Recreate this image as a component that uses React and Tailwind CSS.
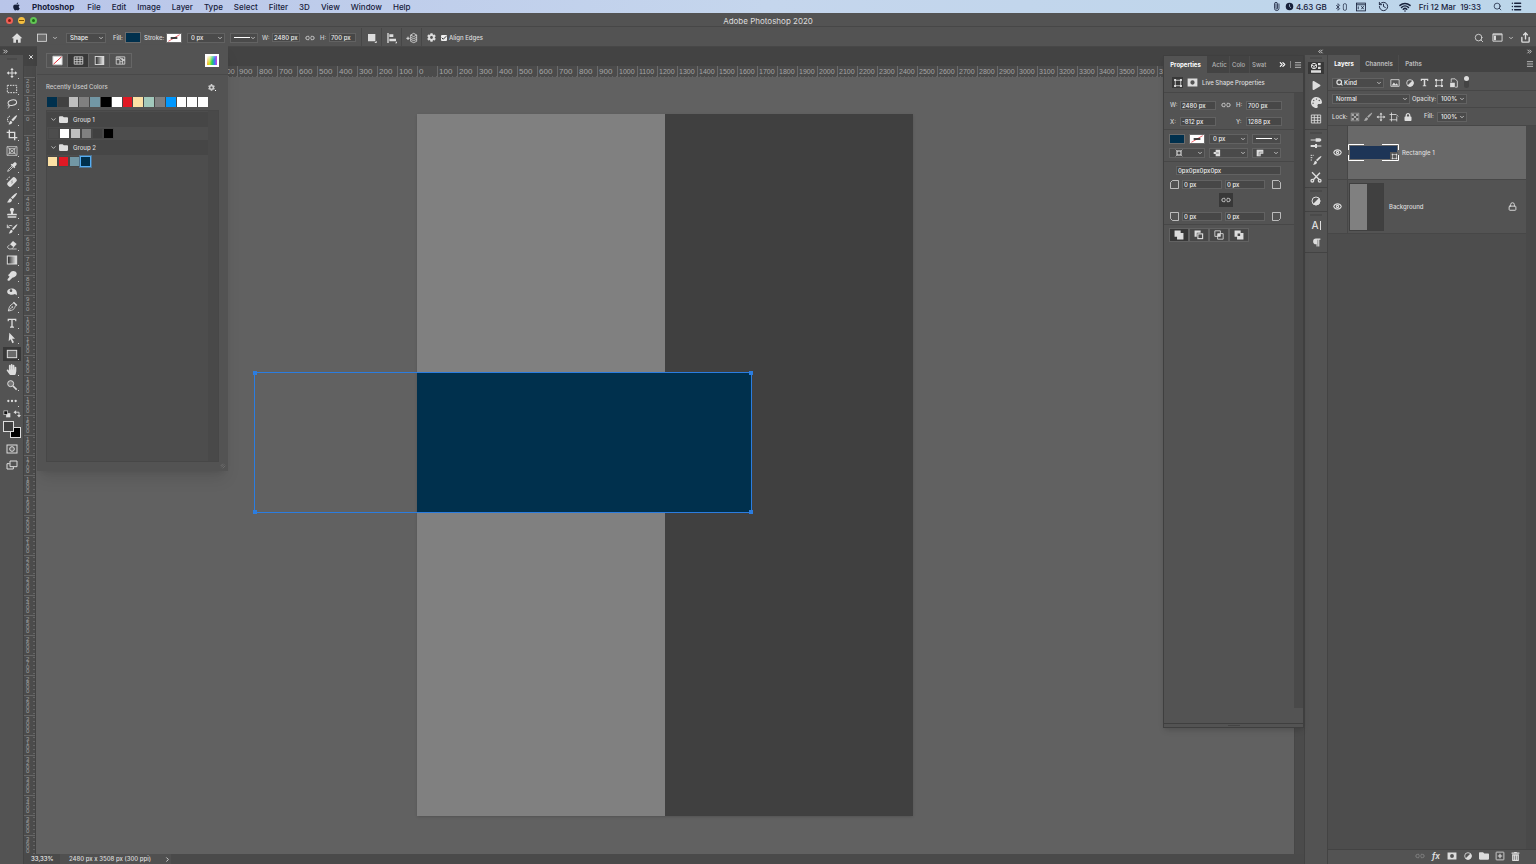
import clsx from "clsx";
import {
  Bluetooth,
  Check,
  ChevronDown,
  ChevronRight,
  ChevronsLeft,
  ChevronsRight,
  Eye,
  History,
  List,
  Lock,
  Menu,
  Paperclip,
  Search,
  Share,
  Wifi,
  X,
} from "lucide-react";
import {
  FaApple,
  FaCog,
  FaFolder,
  FaHandPaper,
  FaLock,
  FaPalette,
  FaParagraph,
  FaPlay,
  FaTrashAlt,
} from "react-icons/fa";

const menus = ["File", "Edit", "Image", "Layer", "Type", "Select", "Filter", "3D", "View", "Window", "Help"];

const recentColors = [
  "#00304d", "#414141", "#bfbfbf", "#808080", "#7297a5", "#000000", "#ffffff", "#e01924",
  "#fce1a5", "#a2c9bc", "#808080", "#0098ff", "#ffffff", "#ffffff", "#ffffff",
];
const groupOne = ["#4d4d4d", "#ffffff", "#bfbfbf", "#808080", "#404040", "#000000"];
const groupTwo = ["#fce1a5", "#e01924", "#7297a5", "#00304d"];

const columns = Array.from({ length: 63 }, (_, i) => Math.abs((i - 19) * 100));
const rows = Array.from({ length: 39 }, (_, i) => Math.abs((i - 2) * 100));

// 36 unit grid shared by every glyph drawn here
function Glyph({ children, className = "size-3", ...rest }) {
  return (
    <svg
      viewBox="0 0 36 36"
      className={clsx("shrink-0", className)}
      fill="none"
      stroke="currentColor"
      strokeWidth="3"
      aria-hidden="true"
      {...rest}
    >
      {children}
    </svg>
  );
}

const solid = { fill: "currentColor", stroke: "none" };

const tools = [
  {
    name: "Move",
    icon: (
      <>
        <path d="M18 6v24M6 18h24" />
        <path {...solid} d="M18 2l5 7H13zM18 34l5-7H13zM2 18l7-5v10zM34 18l-7-5v10z" />
      </>
    ),
  },
  { name: "Marquee", icon: <rect x="4" y="7" width="28" height="22" strokeDasharray="5 3" /> },
  {
    name: "Lasso",
    icon: (
      <>
        <ellipse cx="19" cy="14" rx="13" ry="8" transform="rotate(-12 19 14)" />
        <path d="M10 20c-5 0-6 7 0 6 2-1 1-4-2-5M10 26c-1 3-3 4-5 5" strokeWidth="2" />
      </>
    ),
  },
  {
    name: "Quick Selection",
    icon: (
      <>
        <path d="M12 6C3 9 2 21 9 26" strokeDasharray="4 2" />
        <path {...solid} d="M33 4c2 2-7 14-12 18l-5-4C20 13 30 3 33 4zM14 20l5 4c0 6-6 8-12 7 4-3 3-9 7-11z" />
      </>
    ),
  },
  { name: "Crop", icon: <path d="M10 2v24h24M2 10h24v24" strokeWidth="4" /> },
  { name: "Frame", icon: <path d="M3 5h30v26H3zM5 7l26 22M31 7L5 29M10 11h16v14H10z" strokeWidth="2.2" /> },
  {
    name: "Eyedropper",
    icon: (
      <>
        <path {...solid} d="M24 5c4-4 11 2 7 7l-5 5 2 2-3 3-11-11 3-3 2 2z" />
        <path d="M19 14L7 26l-2 5 5-2 12-12" strokeWidth="2.4" />
      </>
    ),
  },
  {
    name: "Healing Brush",
    icon: (
      <>
        <rect {...solid} x="2" y="10" width="32" height="16" rx="6" transform="rotate(-45 18 18)" />
        <path d="M15 16h2M19 20h2M19 15h2M15 21h2" stroke="#535353" strokeWidth="2" />
        <path d="M3 12c1-5 5-9 9-9" strokeDasharray="3 2" />
      </>
    ),
  },
  {
    name: "Brush",
    icon: <path {...solid} d="M33 3c2 2-8 14-13 18l-5-4C19 12 31 1 33 3zM13 19l5 4c0 7-8 10-15 8 5-3 4-10 10-12z" />,
  },
  {
    name: "Clone Stamp",
    icon: <path {...solid} d="M18 3c7 0 8 6 4 10l-1 7h9c2 0 3 2 3 5H3c0-3 1-5 3-5h9l-1-7c-4-4-3-10 4-10zM5 28h26v4H5z" />,
  },
  {
    name: "History Brush",
    icon: (
      <>
        <path {...solid} d="M34 4c1 2-7 13-12 17l-4-3C22 13 32 3 34 4zM16 20l4 3c0 6-7 9-12 8 4-3 3-9 8-11z" />
        <path d="M4 13c4-6 10-7 15-4M4 5v9h8" strokeWidth="2.6" />
      </>
    ),
  },
  {
    name: "Eraser",
    icon: (
      <>
        <path {...solid} d="M21 6l11 9-9 10-11-9z" />
        <path d="M11 17l-7 7 5 6h8l6-6M17 30h15" strokeWidth="2.4" />
      </>
    ),
  },
  {
    name: "Gradient",
    icon: (
      <>
        <defs>
          <linearGradient id="toolGradient">
            <stop offset="0" stopColor="#222222" />
            <stop offset="1" stopColor="#eeeeee" />
          </linearGradient>
        </defs>
        <rect x="4" y="6" width="28" height="24" fill="url(#toolGradient)" />
      </>
    ),
  },
  {
    name: "Smudge",
    icon: <path {...solid} d="M15 5c7-4 15-1 17 5 1 6-3 10-8 12l-5 1-9 9c-4 2-7-2-5-5l6-7-4-3c-1-2 1-4 3-5z" />,
  },
  {
    name: "Dodge",
    icon: (
      <path
        fill="currentColor"
        stroke="none"
        fillRule="evenodd"
        d="M4 14C8 6 22 5 28 11c4 4 6 10 4 17l-5-4c-6 4-18 3-22-2-1-2-2-5-1-8zm7 0a4 4 0 108 0 4 4 0 00-8 0z"
      />
    ),
  },
  {
    name: "Pen",
    icon: (
      <>
        <path d="M23 5l8 8-4 3c-1 8-6 12-20 14C9 18 12 12 20 9zM7 30l10-10" strokeWidth="2.6" />
        <circle cx="19" cy="18" r="2.6" {...solid} />
        <path {...solid} d="M24 2l10 10-3 3L21 5z" />
      </>
    ),
  },
  { name: "Type", icon: <path {...solid} d="M5 5h26v8h-3l-1-4h-7v19l4 1v3H12v-3l4-1V9H9l-1 4H5z" /> },
  { name: "Path Selection", icon: <path {...solid} d="M10 2l17 18h-9l6 11-5 3-5-12-6 6z" /> },
  { name: "Rectangle", active: true, icon: <rect x="4" y="7" width="28" height="22" fill="#6a6a6a" /> },
  { name: "Hand", node: <FaHandPaper className="size-[11px]" /> },
  {
    name: "Zoom",
    icon: (
      <>
        <circle cx="14" cy="14" r="9" fill="#777777" />
        <path d="M21 21l11 11" strokeWidth="5" />
      </>
    ),
  },
  {
    name: "More tools",
    icon: (
      <g {...solid}>
        <circle cx="7" cy="18" r="3.4" />
        <circle cx="18" cy="18" r="3.4" />
        <circle cx="29" cy="18" r="3.4" />
      </g>
    ),
  },
];

const shapeIcon = (
  <>
    <rect x="8" y="8" width="20" height="20" />
    <path {...solid} d="M4 4h7v7H4zM25 4h7v7h-7zM4 25h7v7H4zM25 25h7v7h-7z" />
  </>
);
const linkIcon = <path d="M15 12H9a6 6 0 000 12h6M21 12h6a6 6 0 010 12h-6M12 18h12" />;
const maskIcon = (
  <path
    fill="currentColor"
    stroke="none"
    fillRule="evenodd"
    d="M2 5h32v26H2zM18 11a7 7 0 100 14 7 7 0 000-14z"
  />
);
const adjustIcon = (
  <>
    <circle cx="18" cy="18" r="12" />
    <path {...solid} d="M27 9A12 12 0 119 27z" />
  </>
);
const gridIcon = <path d="M4 6h28v24H4zM4 14h28M4 22h28M13 6v24M23 6v24" strokeWidth="2.6" />;

function Divider() {
  return <span className="h-5 w-px shrink-0 bg-[#474747]" />;
}

function Field({ label, value, className, labelClassName }) {
  return (
    <label className="flex shrink-0 items-center gap-1">
      <span className={clsx("text-[#d0d0d0]", labelClassName)}>{label}</span>
      <input
        defaultValue={value}
        className={clsx("h-[9px] min-w-0 border border-[#626262] bg-[#474747] px-px text-[#eeeeee] outline-none", className)}
      />
    </label>
  );
}

function Dropdown({ label, value, className, children }) {
  return (
    <span className={clsx("relative flex h-[10px] shrink-0 items-center border border-[#626262] bg-[#4a4a4a]", className)}>
      <select
        aria-label={label}
        className={clsx(
          "h-full w-full min-w-0 appearance-none bg-transparent text-[#eeeeee] outline-none",
          children ? "pl-[11px]" : "pl-[3px]"
        )}
      >
        <option>{value}</option>
      </select>
      {children && <span className="pointer-events-none absolute inset-y-0 left-[3px] flex items-center">{children}</span>}
      <ChevronDown className="pointer-events-none absolute right-px size-[6px]" strokeWidth={3} />
    </span>
  );
}

function NoStroke({ className }) {
  return (
    <button aria-label="Stroke color" className={clsx("shrink-0 border border-[#6b6b6b] bg-white", className)}>
      <svg viewBox="0 0 42 24" className="size-full" preserveAspectRatio="none" aria-hidden="true">
        <path d="M4 22L38 2" stroke="#e01924" strokeWidth="2" />
        <path d="M11 12h20" stroke="#222222" strokeWidth="5" />
      </svg>
    </button>
  );
}

function Swatches({ colors, className, selected }) {
  return (
    <div className={clsx("flex h-[11px]", className)}>
      {colors.map((color, i) => (
        <button
          key={i}
          aria-label={`Swatch ${color}`}
          className={clsx(
            "h-full w-[11px] border",
            selected === i ? "border-[#55aef5] outline outline-[#55aef5]/40" : "border-[#484848]"
          )}
          style={{ backgroundColor: color }}
        />
      ))}
    </div>
  );
}

function MenuBar() {
  return (
    <header className="flex h-[13px] shrink-0 items-center bg-linear-to-r from-[#b9c5e9] via-[#c5d6ed] to-[#bcd6ea] pr-[14px] pl-3 text-[8px] text-[#17203a]">
      <FaApple className="mr-[11px] size-[9px]" />
      <nav className="flex items-center gap-[11px]">
        <a href="#photoshop" className="mr-[2px] font-bold">
          Photoshop
        </a>
        {menus.map((menu) => (
          <a key={menu} href={`#${menu.toLowerCase()}`}>
            {menu}
          </a>
        ))}
      </nav>
      <div className="ml-auto flex items-center">
        <Paperclip className="mr-1 size-[9px] -rotate-45" />
        <Glyph className="mr-[2px] size-[9px]">
          <circle cx="18" cy="18" r="15" {...solid} />
          <path d="M18 9v9l6 5" stroke="#bcd6ea" />
        </Glyph>
        <span className="mr-[7px]">4.63 GB</span>
        <Bluetooth className="size-[8px]" />
        <Glyph className="mr-[6px] size-[8px]">
          <rect x="6" y="3" width="14" height="30" rx="6" />
        </Glyph>
        <Glyph className="mr-3 size-[10px]">
          <rect x="2" y="4" width="32" height="28" />
          <path d="M2 10h32M19 15l9 11M28 15l-9 11M8 16v10" />
        </Glyph>
        <History className="mr-[10px] size-[11px]" />
        <Wifi className="mr-2 size-3" strokeWidth={3} />
        <span className="mr-3">Fri 12 Mar&nbsp; 19:33</span>
        <Search className="mr-[9px] size-[9px]" />
        <List className="size-[11px]" strokeWidth={3} />
      </div>
    </header>
  );
}

function TitleBar() {
  return (
    <div className="flex h-[14px] shrink-0 items-center border-b border-[#474747] bg-[#535353] px-[6px] pt-[2px] text-[8px] font-normal">
      <div className="flex flex-1 gap-[5px]">
        <button aria-label="Close" className="size-[7px] rounded-full border-2 border-[#ee6055] bg-[#8c1a10]" />
        <button aria-label="Minimise" className="flex size-[7px] items-center rounded-full bg-[#f4be3f] px-px">
          <span className="h-px w-full bg-[#7d5205]" />
        </button>
        <button aria-label="Zoom" className="size-[7px] rounded-full border-2 border-[#61c454] bg-[#1c6b14]" />
      </div>
      <h1>Adobe Photoshop 2020</h1>
      <div className="flex-1" />
    </div>
  );
}

function OptionsBar() {
  return (
    <div className="flex h-5 shrink-0 items-center border-b border-[#474747] bg-[#535353] pt-[2px] pr-[5px] pl-[7px]">
      <button aria-label="Home" className="mr-[5px] flex w-5 justify-center">
        <Glyph>
          <path {...solid} d="M18 4L2 19h5v13h8v-9h6v9h8V19h5z" />
        </Glyph>
      </button>
      <button aria-label="Tool preset" className="mr-3 flex w-[22px] items-center justify-between pl-[5px]">
        <Glyph className="size-[10px]">
          <rect x="2" y="4" width="32" height="26" fill="#6a6a6a" />
        </Glyph>
        <ChevronDown className="-mr-1 size-[6px] shrink-0" strokeWidth={3} />
      </button>
      <Dropdown label="Mode" value="Shape" className="mr-[7px] w-10" />
      <span className="w-3">Fill:</span>
      <button aria-label="Fill color" className="mr-[3px] h-[11px] w-4 border border-[#6b6b6b] bg-[#00304d]" />
      <span className="w-[22px]">Stroke:</span>
      <NoStroke className="mr-[5px] h-[10px] w-4" />
      <Dropdown label="Stroke width" value="0 px" className="mr-[5px] w-[38px]" />
      <Dropdown label="Stroke style" value="" className="mr-1 w-[28px]">
        <span className="h-px w-4 bg-white" />
      </Dropdown>
      <Field label="W:" value="2480 px" className="w-[28px]" labelClassName="w-[6px]" />
      <Glyph className="mx-[5px] size-[10px]">{linkIcon}</Glyph>
      <Field label="H:" value="700 px" className="w-[27px]" labelClassName="w-[5px]" />
      <span className="w-[5px]" />
      <Divider />
      <button aria-label="Path operations" className="mr-[3px] ml-1">
        <Glyph>
          <path {...solid} d="M6 6h22v22H6zM32 26v7h-7z" />
        </Glyph>
      </button>
      <Divider />
      <button aria-label="Path alignment" className="mr-[3px] ml-1">
        <Glyph>
          <path {...solid} d="M4 3h4v30H4zM10 7h12v8H10zM10 20h20v8H10zM33 28v6h-6z" />
        </Glyph>
      </button>
      <Divider />
      <button aria-label="Path arrangement" className="mr-[3px] ml-1">
        <Glyph>
          <path d="M1 19h10M6 14v10" />
          <path d="M14 9l9-5 9 5-9 5zM14 16l9 4 9-4M14 22l9 4 9-4M14 28l9 4 9-4M14 9v19M32 9v19" strokeWidth="2.4" />
        </Glyph>
      </button>
      <Divider />
      <FaCog className="mr-[5px] ml-[5px] size-[9px]" />
      <label className="flex items-center gap-[2px]">
        <span className="relative flex">
          <input
            type="checkbox"
            defaultChecked
            className="size-[6px] appearance-none rounded-[1px] bg-[#eeeeee]"
          />
          <Check className="pointer-events-none absolute inset-0 size-[6px] text-[#333333]" strokeWidth={4} />
        </span>
        Align Edges
      </label>
      <div className="ml-auto flex items-center">
        <Search className="mr-2 size-[10px]" />
        <Glyph className="mr-[5px] size-[11px]">
          <path d="M3 6h30v24H3zM3 9h30" />
          <path {...solid} d="M6 12h7v15H6z" />
        </Glyph>
        <ChevronDown className="mr-[6px] size-[6px]" strokeWidth={3} />
        <Share className="size-[11px]" strokeWidth={3} />
      </div>
    </div>
  );
}

function Toolbar() {
  return (
    <aside className="flex w-6 shrink-0 flex-col items-center border-r border-[#434343] bg-[#535353]">
      <div className="flex h-2 w-full items-center bg-[#434343] pl-[2px]">
        <ChevronsRight className="size-[7px]" strokeWidth={3} />
      </div>
      <span className="mt-[3px] h-[2px] w-[10px] bg-[#4a4a4a]" />
      <div className="mt-[6px] flex h-[342px] shrink-0 flex-col justify-between">
        {tools.map(({ name, icon, node, active }) => (
          <button
            key={name}
            aria-label={name}
            title={name}
            className={clsx("relative flex h-[14px] w-[18px] items-center justify-center", active && "bg-[#383838]")}
          >
            {node || <Glyph>{icon}</Glyph>}
            <span className="absolute right-[2px] bottom-px size-px bg-[#cccccc]" />
          </button>
        ))}
      </div>
      <div className="mt-[2px] flex w-[18px] justify-between">
        <Glyph className="size-2">
          <path {...solid} d="M14 14h19v19H14z" />
          <rect x="4" y="4" width="17" height="17" fill="#111111" />
        </Glyph>
        <Glyph className="size-2">
          <path d="M12 10h15v17" strokeWidth="4" />
          <path {...solid} d="M2 10l12-9v18zM27 34l-9-12h18z" />
        </Glyph>
      </div>
      <div className="relative mt-[3px] h-[17px] w-[18px] shrink-0">
        <button aria-label="Background color" className="absolute right-0 bottom-0 size-[11px] border border-[#dddddd] bg-black" />
        <button aria-label="Foreground color" className="absolute top-0 left-0 size-[11px] border border-[#dddddd] bg-[#404040]" />
      </div>
      <button aria-label="Quick mask" className="mt-[5px]">
        <Glyph>
          <rect x="3" y="6" width="30" height="24" />
          <circle cx="18" cy="18" r="7" fill="#6a6a6a" />
        </Glyph>
      </button>
      <button aria-label="Screen mode" className="mt-1">
        <Glyph>
          <path d="M12 6h21v17H12z" />
          <path d="M11 14H3v16h19v-6" />
        </Glyph>
      </button>
    </aside>
  );
}

function Document() {
  return (
    <main className="flex min-w-0 flex-1 flex-col bg-[#434343]">
      <div className="flex h-[19px] shrink-0 items-center pl-1">
        <button aria-label="Close document">
          <X className="size-[6px]" strokeWidth={4} />
        </button>
      </div>
      <div className="flex h-[11px] shrink-0 overflow-hidden bg-[#4b4b4b] bg-[repeating-linear-gradient(to_right,#666_0_1px,transparent_1px_4px)] bg-size-[100%_1px] bg-bottom bg-no-repeat text-[#a5a5a5]">
        <span className="w-[13px] shrink-0 border-r border-[#5a5a5a] bg-[#4b4b4b]" />
        {columns.map((n, i) => (
          <span
            key={i}
            className={clsx(
              "flex w-5 shrink-0 items-center border-l border-[#6a6a6a] pl-px font-['Liberation_Sans',sans-serif]",
              n > 900 ? "text-[7px]" : "text-[8px]"
            )}
          >
            {n}
          </span>
        ))}
      </div>
      <div className="flex min-h-0 flex-1">
        <div className="flex w-3 shrink-0 flex-col overflow-hidden border-r border-[#424242] bg-[#4b4b4b] bg-[repeating-linear-gradient(to_bottom,#666_0_1px,transparent_1px_4px)] bg-size-[2px_100%] bg-right bg-no-repeat font-['Liberation_Sans',sans-serif] text-[6px] text-[#a0a0a0]">
          {rows.map((n, i) => (
            <span
              key={i}
              className={clsx(
                "flex w-full shrink-0 flex-col border-t border-[#666666] pt-px pl-[2px]",
                i === 0 ? "h-[18px]" : "h-5",
                n > 900 ? "leading-[4px]" : "leading-[5px]"
              )}
            >
              {String(n)
                .split("")
                .map((digit, j) => (
                  <span key={j}>{digit}</span>
                ))}
            </span>
          ))}
        </div>
        <div className="flex min-w-0 flex-1 items-center justify-center overflow-hidden bg-[#616161] pb-[2px]">
          <div className="relative flex h-[702px] w-[496px] shrink-0 shadow-sm">
            <div className="flex-1 bg-[#808080]" />
            <div className="flex-1 bg-[#404040]" />
            <div className="absolute top-[258px] left-0 h-[141px] w-[334px] bg-[#00304d]" />
            <div className="absolute top-[258px] -left-[163px] h-[141px] w-[498px] border border-[#2b7de0]">
              <span className="absolute -top-[2px] -left-[2px] size-[4px] bg-[#2b7de0]" />
              <span className="absolute -top-[2px] -right-[2px] size-[4px] bg-[#2b7de0]" />
              <span className="absolute -bottom-[2px] -left-[2px] size-[4px] bg-[#2b7de0]" />
              <span className="absolute -right-[2px] -bottom-[2px] size-[4px] bg-[#2b7de0]" />
            </div>
          </div>
        </div>
        <div className="w-[10px] shrink-0 border-l border-[#474747] bg-[#4b4b4b]" />
      </div>
      <footer className="flex h-[10px] shrink-0 items-center bg-[#4a4a4a] pr-[10px]">
        <span className="w-9 pl-[7px] text-[#eeeeee]">33,33%</span>
        <span className="flex h-full w-[111px] items-center justify-between bg-[#505050] pl-[9px] whitespace-nowrap">
          2480 px x 3508 px (300 ppi)
          <ChevronRight className="size-[7px]" strokeWidth={3} />
        </span>
      </footer>
    </main>
  );
}

function GroupHeader({ name }) {
  return (
    <button className="flex h-[15px] w-full items-center gap-[2px] bg-[#464646] pl-[3px] text-left">
      <ChevronDown className="size-[7px]" strokeWidth={2.5} />
      <FaFolder className="mr-[3px] size-[9px]" />
      {name}
    </button>
  );
}

function FillPopover() {
  return (
    <section className="absolute top-[45px] left-[37px] flex h-[426px] w-[191px] flex-col bg-[#535353] shadow-lg">
      <div className="flex h-[30px] shrink-0 items-center border-b border-[#494949] px-[9px] pt-[2px]">
        <div className="flex h-[15px] divide-x divide-[#666666] border border-[#666666]">
          <button aria-label="No color" className="flex w-[21px] items-center justify-center">
            <Glyph className="size-[11px]">
              <path d="M3 4h30v28H3z" fill="#ffffff" stroke="#cccccc" />
              <path d="M5 30L31 6" stroke="#e01924" />
            </Glyph>
          </button>
          <button aria-label="Solid color" className="flex w-[21px] items-center justify-center bg-[#383838]">
            <Glyph className="size-[11px]">{gridIcon}</Glyph>
          </button>
          <button aria-label="Gradient" className="flex w-[21px] items-center justify-center">
            <Glyph className="size-[11px]">
              <rect x="4" y="5" width="28" height="26" fill="url(#toolGradient)" />
            </Glyph>
          </button>
          <button aria-label="Pattern" className="flex w-[21px] items-center justify-center">
            <Glyph className="size-[11px]">
              <path d="M4 6h28v24H4zM4 15h12v15M16 6v5h9v19M25 18h7M10 6v9M16 22h9M20 15h12" strokeWidth="2.6" />
            </Glyph>
          </button>
        </div>
        <button
          aria-label="Color picker"
          className="ml-auto h-[13px] w-[14px] border-2 border-white bg-[linear-gradient(to_bottom_right,#fff,transparent_55%),linear-gradient(to_right,#ff9a1f,#c8e820,#25d060,#3a7df0,#d040e0)]"
        />
      </div>
      <div className="flex h-[22px] shrink-0 items-center justify-between pt-[2px] pr-[12px] pl-[9px] text-[#cccccc]">
        <h2>Recently Used Colors</h2>
        <button aria-label="Swatch options" className="flex items-end">
          <FaCog className="size-[7px]" />
          <span className="size-px bg-white" />
        </button>
      </div>
      <div className="mr-[20px] ml-[10px] grid h-[10px] shrink-0 grid-cols-15 gap-px bg-[#484848]">
        {recentColors.map((color, i) => (
          <button key={i} aria-label={`Recent ${color}`} style={{ backgroundColor: color }} />
        ))}
      </div>
      <div className="mx-[9px] mt-[3px] mb-[9px] flex flex-1 border border-[#474747] bg-[#4d4d4d]">
        <div className="flex flex-1 flex-col pt-px">
          <GroupHeader name="Group 1" />
          <Swatches colors={groupOne} className="my-px ml-px" />
          <GroupHeader name="Group 2" />
          <Swatches colors={groupTwo} className="mt-px" selected={3} />
        </div>
        <div className="w-[10px] bg-[#494949]" />
      </div>
      <svg viewBox="0 0 18 18" className="absolute right-[2px] bottom-[2px] size-[6px]" stroke="#777777" strokeWidth="2" aria-hidden="true">
        <path d="M2 9l7-7M4 13l9-9M8 16l8-8" />
      </svg>
    </section>
  );
}

function PropertiesPanel() {
  return (
    <section className="absolute top-[55px] right-[232px] flex h-[673px] w-[141px] flex-col border border-[#3f3f3f] bg-[#535353] shadow-md">
      <div className="flex h-[17px] shrink-0 items-stretch bg-[#434343] text-[#b5b5b5]" role="tablist">
        <button role="tab" aria-selected="true" className="w-[43px] bg-[#535353] font-bold text-white">
          Properties
        </button>
        <button role="tab" className="w-[23px] border-r border-[#4c4c4c] pl-[5px] text-left">Actic</button>
        <button role="tab" className="w-[20px] border-r border-[#4c4c4c] pl-[2px] text-left">Colo</button>
        <button role="tab" className="w-[22px] pl-[2px] text-left">Swat</button>
        <div className="flex flex-1 items-center justify-end gap-[3px] pr-px">
          <ChevronsRight className="size-[9px] text-white" strokeWidth={3} />
          <span className="h-[7px] w-px bg-[#888888]" />
          <Menu className="size-[8px]" strokeWidth={3} />
        </div>
      </div>
      <div className="flex h-5 shrink-0 items-center gap-[4px] border-b border-[#474747] pl-2">
        <span className="flex size-[11px] items-center justify-center bg-[#383838]">
          <Glyph className="size-[10px]">{shapeIcon}</Glyph>
        </span>
        <Glyph className="size-[11px]">{maskIcon}</Glyph>
        <h2>Live Shape Properties</h2>
      </div>
      <div className="flex min-h-0 flex-1">
        <div className="min-w-0 flex-1">
          <div className="flex h-[37px] flex-col justify-end gap-[7px] border-b border-[#474747] pb-[3px] pl-[6px]">
            <div className="flex items-center">
              <Field label="W:" value="2480 px" className="w-9" labelClassName="w-[6px]" />
              <Glyph className="mx-[5px] size-[10px]">{linkIcon}</Glyph>
              <Field label="H:" value="700 px" className="w-9" labelClassName="w-[6px]" />
            </div>
            <div className="flex items-center gap-5">
              <Field label="X:" value="-812 px" className="w-9" labelClassName="w-[6px]" />
              <Field label="Y:" value="1288 px" className="w-9" labelClassName="w-[6px]" />
            </div>
          </div>
          <div className="flex h-8 flex-col justify-center gap-1 border-b border-[#474747] pl-[5px]">
            <div className="flex items-center">
              <button aria-label="Fill" className="mr-1 h-[10px] w-4 border border-[#6b6b6b] bg-[#00304d]" />
              <NoStroke className="mr-1 h-[10px] w-4" />
              <Dropdown label="Stroke weight" value="0 px" className="mr-1 w-[39px]" />
              <Dropdown label="Line type" value="" className="w-[29px]">
                <span className="h-px w-4 bg-white" />
              </Dropdown>
            </div>
            <div className="flex items-center gap-1">
              <Dropdown label="Stroke alignment" value="" className="w-9">
                <Glyph className="ml-[2px] size-[8px]">
                  <rect x="9" y="9" width="18" height="18" strokeWidth="5" />
                  <path d="M3 3l5 5M33 3l-5 5M3 33l5-5M33 33l-5-5" />
                </Glyph>
              </Dropdown>
              <Dropdown label="Line cap" value="" className="w-[39px]">
                <Glyph className="size-[8px]">
                  <path {...solid} d="M12 3h20v30H12V23H3V13h9z" />
                  <path d="M14 18h12" stroke="#4a4a4a" />
                </Glyph>
              </Dropdown>
              <Dropdown label="Line join" value="" className="w-[29px]">
                <Glyph className="size-[8px]">
                  <path {...solid} d="M3 3h30v18H21v12H3z" />
                  <path d="M14 30V14h16" stroke="#4a4a4a" strokeWidth="2" />
                </Glyph>
              </Dropdown>
            </div>
          </div>
          <div className="flex h-[63px] flex-col justify-between border-b border-[#474747] pt-1 pr-[13px] pb-[3px] pl-[6px]">
            <input
              aria-label="Corner radii"
              defaultValue="0px0px0px0px"
              className="ml-[6px] h-[9px] border border-[#626262] bg-[#474747] px-px text-[#eeeeee] outline-none"
            />
            <div className="flex items-center gap-[3px]">
              <Glyph className="size-[9px]">
                <path d="M2 34V10L10 2h24v32z" />
              </Glyph>
              <Field label="" value="0 px" className="-ml-1 w-[40px]" />
              <Field label="" value="0 px" className="-ml-1 w-[40px]" />
              <Glyph className="ml-auto size-[9px]">
                <path d="M2 2h24l8 8v24H2z" />
              </Glyph>
            </div>
            <button aria-label="Link corners" className="flex size-[14px] items-center justify-center self-center bg-[#383838]">
              <Glyph className="size-[10px]">{linkIcon}</Glyph>
            </button>
            <div className="flex items-center gap-[3px]">
              <Glyph className="size-[9px]">
                <path d="M2 2v24l8 8h24V2z" />
              </Glyph>
              <Field label="" value="0 px" className="-ml-1 w-[40px]" />
              <Field label="" value="0 px" className="-ml-1 w-[40px]" />
              <Glyph className="ml-auto size-[9px]">
                <path d="M2 2v32h24l8-8V2z" />
              </Glyph>
            </div>
          </div>
          <div className="flex pt-[3px] pl-[5px]">
            <button aria-label="Combine shapes" className="flex h-[14px] w-5 items-center justify-center border border-[#626262] bg-[#383838]">
              <Glyph className="size-[10px]">
                <path {...solid} d="M2 2h22v9h10v23H11V24H2z" />
              </Glyph>
            </button>
            <button aria-label="Subtract front shape" className="flex h-[14px] w-5 items-center justify-center border border-[#626262] bg-[#484848]">
              <Glyph className="size-[10px]">
                <path {...solid} d="M2 2h22v8H10v14H2z" />
                <rect x="14" y="14" width="17" height="17" strokeWidth="4" />
              </Glyph>
            </button>
            <button aria-label="Intersect shapes" className="flex h-[14px] w-5 items-center justify-center border border-[#626262] bg-[#484848]">
              <Glyph className="size-[10px]">
                <path d="M3 3h20v20H3zM13 13h20v20H13z" />
                <path {...solid} d="M14 14h8v8h-8z" />
              </Glyph>
            </button>
            <button aria-label="Exclude overlap" className="flex h-[14px] w-5 items-center justify-center border border-[#626262] bg-[#484848]">
              <Glyph className="size-[10px]">
                <path
                  fill="currentColor"
                  stroke="none"
                  fillRule="evenodd"
                  d="M2 2h22v9h10v23H11V24H2zM13 13v9h9v-9z"
                />
              </Glyph>
            </button>
          </div>
        </div>
        <div className="mb-[15px] w-[9px] shrink-0 bg-[#494949]" />
      </div>
      <div className="flex h-1 shrink-0 items-center justify-center border-t border-[#3f3f3f]">
        <span className="h-px w-3 bg-[#444444]" />
      </div>
    </section>
  );
}

function DockGroup({ children }) {
  return (
    <div className="flex flex-col items-center border-b border-[#434343] pt-[2px] pb-1">
      <span className="mb-[3px] h-[2px] w-3 bg-[#4a4a4a]" />
      <div className="flex flex-col items-center gap-[5px]">{children}</div>
    </div>
  );
}

function Dock() {
  return (
    <aside className="flex w-6 shrink-0 flex-col border-x border-[#434343] bg-[#535353]">
      <div className="flex h-2 items-center justify-end bg-[#434343] pr-[3px]">
        <ChevronsLeft className="size-[7px]" strokeWidth={3} />
      </div>
      <DockGroup>
        <button aria-label="Properties" className="flex h-3 w-4 items-center justify-center bg-[#383838]">
          <Glyph>
            <path {...solid} d="M3 25h30v7H3zM24 3h8v7h-8zM24 14h8v7h-8z" />
            <circle cx="12" cy="12" r="8" />
            <path d="M5 9l7 4 7-4M12 13v7" />
          </Glyph>
        </button>
        <button aria-label="Actions" className="flex h-3 items-center">
          <FaPlay className="size-[9px]" />
        </button>
        <button aria-label="Color" className="flex h-3 items-center">
          <FaPalette className="size-[11px]" />
        </button>
        <button aria-label="Swatches" className="flex h-3 items-center">
          <Glyph>{gridIcon}</Glyph>
        </button>
      </DockGroup>
      <DockGroup>
        <button aria-label="Brush settings">
          <Glyph>
            <path d="M2 9h16M18 27h16" />
            <path {...solid} d="M17 4h11c4 0 6 3 6 5s-2 5-6 5H17zM2 24h13v-3h6v12h-6v-3H2z" />
          </Glyph>
        </button>
        <button aria-label="Brushes">
          <Glyph>
            <path d="M2 4h9M2 11h7M2 18h5" strokeDasharray="4 2" />
            <path {...solid} d="M34 6c2 2-8 12-12 16l-4-4C22 14 32 4 34 6zM16 20l5 4c0 6-6 9-12 8 4-3 3-10 7-12z" />
          </Glyph>
        </button>
        <button aria-label="Clone source">
          <Glyph strokeWidth="4">
            <path d="M6 4l22 22M30 5L10 26" />
            <circle cx="7" cy="29" r="4" />
            <circle cx="29" cy="29" r="4" />
          </Glyph>
        </button>
      </DockGroup>
      <DockGroup>
        <button aria-label="Adjustments">
          <Glyph>{adjustIcon}</Glyph>
        </button>
      </DockGroup>
      <DockGroup>
        <button aria-label="Character" className="flex h-3 items-center gap-px text-[10px] leading-3">
          A
          <span className="h-[9px] w-px bg-current" />
        </button>
        <button aria-label="Paragraph" className="flex h-3 items-center">
          <FaParagraph className="size-[9px]" />
        </button>
      </DockGroup>
    </aside>
  );
}

function LayersPanel() {
  return (
    <aside className="flex w-52 shrink-0 flex-col bg-[#535353]">
      <div className="flex h-2 shrink-0 items-center justify-end bg-[#434343] pr-[3px]">
        <ChevronsRight className="size-[7px]" strokeWidth={3} />
      </div>
      <div className="flex h-[17px] shrink-0 items-stretch bg-[#434343] text-[#b5b5b5]" role="tablist">
        <button role="tab" aria-selected="true" className="w-8 bg-[#535353] font-bold text-white">
          Layers
        </button>
        <button role="tab" className="w-[39px] border-r border-[#4c4c4c] font-bold">Channels</button>
        <button role="tab" className="w-[29px] font-bold">Paths</button>
        <Menu className="mr-[2px] ml-auto size-[8px] self-center" strokeWidth={3} />
      </div>
      <div className="flex h-[19px] shrink-0 items-center gap-[5px] border-b border-[#474747] pt-[3px] pl-1">
        <Dropdown label="Filter kind" value="Kind" className="mr-px w-[52px]">
          <Search className="size-[7px]" strokeWidth={4} />
        </Dropdown>
        <Glyph className="size-[10px]">
          <path d="M3 6h30v24H3z" />
          <path {...solid} d="M6 27l8-11 6 7 4-4 6 8z" />
        </Glyph>
        <Glyph className="size-[10px]">{adjustIcon}</Glyph>
        <Glyph className="size-[9px]">
          <path {...solid} d="M3 3h30v9h-4l-1-4h-7v21l4 1v3H11v-3l4-1V8H8l-1 4H3z" />
        </Glyph>
        <Glyph className="size-[10px]">{shapeIcon}</Glyph>
        <Glyph className="size-[10px]">
          <path d="M8 15V3h14l8 8v22h-8" />
          <path {...solid} d="M4 17h17v16H4z" />
        </Glyph>
        <button aria-label="Toggle filter" className="flex h-[10px] w-[5px] rounded-full bg-[#444444]">
          <span className="-mt-[2px] size-[5px] rounded-full bg-[#dddddd]" />
        </button>
      </div>
      <div className="flex h-[17px] shrink-0 items-center border-b border-[#474747] pl-1">
        <Dropdown label="Blend mode" value="Normal" className="w-[78px]" />
        <span className="w-[27px] pl-[2px]">Opacity:</span>
        <Dropdown label="Opacity" value="100%" className="w-[30px]" />
      </div>
      <div className="flex h-[18px] shrink-0 items-center border-b border-[#474747] pl-1">
        <span className="w-[18px]">Lock:</span>
        <div className="flex flex-1 items-center gap-[3px]">
          <Glyph className="size-[10px] text-[#aaaaaa]">
            <rect x="4" y="4" width="28" height="28" strokeWidth="2" />
            <path {...solid} d="M6 6h8v8H6zM22 6h8v8h-8zM14 14h8v8h-8zM6 22h8v8H6zM22 22h8v8h-8z" />
          </Glyph>
          <Glyph className="size-[10px] text-[#aaaaaa]">{tools[8].icon}</Glyph>
          <Glyph className="size-[10px]">{tools[0].icon}</Glyph>
          <Glyph className="size-[10px]">
            <path d="M9 2v32M2 9h24l7 7M2 28h26M28 16v18" />
          </Glyph>
          <FaLock className="ml-[2px] size-[8px]" />
        </div>
        <div className="mr-[69px] flex">
          <span className="w-[13px]">Fill:</span>
          <Dropdown label="Fill opacity" value="100%" className="w-[30px]" />
        </div>
      </div>
      <div className="flex min-h-0 flex-1">
        <ul className="min-w-0 flex-1 bg-[#4d4d4d]">
          <li className="flex h-[54px] border-b border-[#474747] bg-[#535353]">
            <button aria-label="Hide Rectangle 1" className="flex w-5 items-center justify-center border-r border-[#474747]">
              <Eye className="size-[9px]" strokeWidth={3} />
            </button>
            <div className="flex flex-1 items-center gap-[3px] bg-[#696969]">
              <span className="relative flex h-[17px] w-[51px] p-[2px]">
                <span className="flex-1 bg-[#1d3557]" />
                <span className="absolute right-px bottom-px flex size-2 items-center justify-center bg-[#555555]">
                  <Glyph className="size-[7px]">{shapeIcon}</Glyph>
                </span>
                <svg viewBox="0 0 51 17" className="absolute inset-0 size-full" fill="none" stroke="#ffffff" aria-hidden="true">
                  <path d="M.5 6V.5H16M34 .5h16.500V6M.5 11v5.500H16M34 16.500h16.500V11" />
                </svg>
              </span>
              Rectangle 1
            </div>
          </li>
          <li className="flex h-[54px] border-b border-[#474747] bg-[#535353]">
            <button aria-label="Hide Background" className="flex w-5 items-center justify-center border-r border-[#474747]">
              <Eye className="size-[9px]" strokeWidth={3} />
            </button>
            <div className="flex flex-1 items-center gap-[5px] pl-px">
              <span className="flex h-12 w-[35px] border border-[#3f3f3f]">
                <span className="flex-1 bg-[#808080]" />
                <span className="flex-1 bg-[#404040]" />
              </span>
              Background
              <Lock className="mr-[9px] ml-auto size-[9px]" strokeWidth={2.5} />
            </div>
          </li>
        </ul>
        <div className="w-[10px] shrink-0 bg-[#494949]" />
      </div>
      <div className="flex h-[15px] shrink-0 items-center justify-end gap-[6px] border-t border-[#434343] pr-4 pb-[2px]">
        <Glyph className="size-[10px] text-[#888888]">{linkIcon}</Glyph>
        <button aria-label="Layer style" className="w-[10px] text-[8px] leading-[10px] font-bold italic">
          fx
        </button>
        <Glyph className="size-[10px]">{maskIcon}</Glyph>
        <Glyph className="size-[10px]">{adjustIcon}</Glyph>
        <FaFolder className="size-[10px]" />
        <Glyph className="size-[10px]">
          <rect x="4" y="4" width="28" height="28" rx="2" />
          <path d="M18 10v16M10 18h16" strokeWidth="4" />
        </Glyph>
        <FaTrashAlt className="size-[9px]" />
      </div>
    </aside>
  );
}

export default function App() {
  return (
    <div className="relative flex h-screen flex-col overflow-hidden bg-[#434343] font-[Inter,sans-serif] text-[6px] leading-[8px] font-medium text-[#dddddd]">
      <MenuBar />
      <TitleBar />
      <OptionsBar />
      <div className="flex min-h-0 flex-1">
        <Toolbar />
        <Document />
        <Dock />
        <LayersPanel />
      </div>
      <FillPopover />
      <PropertiesPanel />
    </div>
  );
}
